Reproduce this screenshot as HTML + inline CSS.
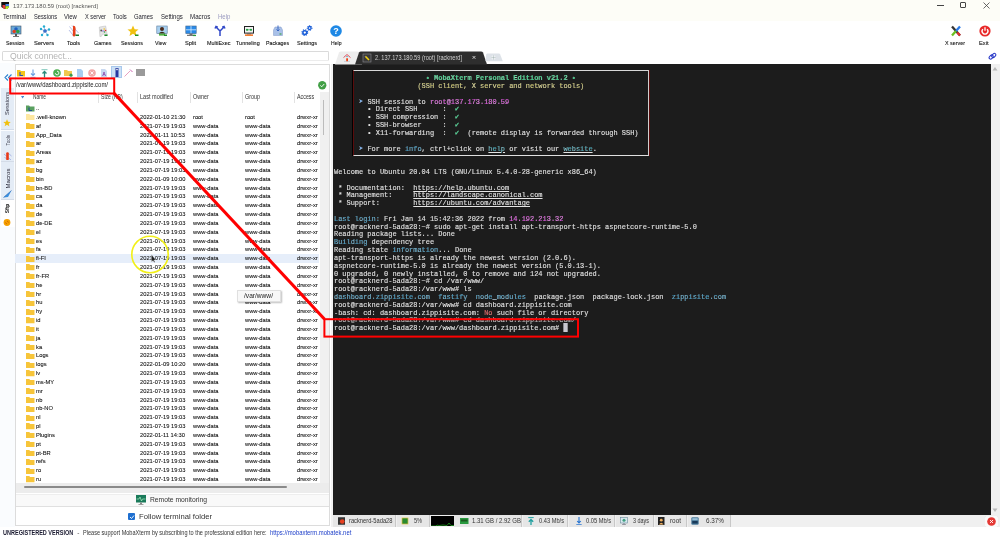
<!DOCTYPE html><html><head><meta charset="utf-8"><style>
*{margin:0;padding:0;box-sizing:border-box}
html,body{width:1000px;height:537px;overflow:hidden;background:#fff;}
body{filter:blur(0.25px);font-family:"Liberation Sans",sans-serif;color:#1a1a1a}
.a{position:absolute;white-space:nowrap}
.t{font-size:6.6px;line-height:8px}
.term{white-space:pre;font-family:"Liberation Mono",monospace;font-size:8px;line-height:7.82px;color:#e4e4e4;-webkit-text-stroke:0.12px #e4e4e4;transform:scaleX(0.86875);transform-origin:0 0}
.tb{font-size:6.2px;line-height:7px;color:#222;text-align:center;transform:scaleX(0.86)}
.row{position:absolute;left:15px;width:304px;height:8.834px;font-size:5.75px;line-height:8.834px;color:#111;overflow:hidden;-webkit-text-stroke:0.08px #111}
.row span{position:absolute;top:0}
</style></head><body><div class="a" style="left:0;top:0;width:1000px;height:21px;background:#fdfdf7"></div><svg class="a" style="left:1.2px;top:2px" width="8" height="7" viewBox="0 0 8 7"><path d="M0.3 0H8V5L6 7H3.5L0.3 5Z" fill="#111"/><path d="M1.5 3H4.5V7H3.5L1.5 5.5Z" fill="#e83a3a"/><rect x="4.5" y="2" width="3.5" height="2.3" fill="#4a8ae8"/><path d="M4.5 4.3H8V5.2L6 7H4.5Z" fill="#b8f020"/></svg><div class="a" style="left:12.60px;top:2.80px;font-size:6.0px;line-height:7.20px;color:#555;transform:scaleX(0.9866);transform-origin:0 50%;">137.173.180.59 (root) [racknerd]</div><div class="a" style="left:936.5px;top:5px;width:7px;height:0.8px;background:#444"></div><div class="a" style="left:960.2px;top:2.4px;width:5.8px;height:5.8px;border:0.8px solid #444;border-radius:1px"></div><svg class="a" style="left:983px;top:2.2px" width="7" height="7" viewBox="0 0 7 7"><path d="M0.5 0.5L6.5 6.5M6.5 0.5L0.5 6.5" stroke="#444" stroke-width="0.8"/></svg><div class="a" style="left:3.40px;top:12.82px;font-size:6.8px;line-height:8.16px;color:#1e1e28;transform:scaleX(0.8951);transform-origin:0 50%;">Terminal</div><div class="a" style="left:33.90px;top:12.82px;font-size:6.8px;line-height:8.16px;color:#1e1e28;transform:scaleX(0.8372);transform-origin:0 50%;">Sessions</div><div class="a" style="left:64.00px;top:12.82px;font-size:6.8px;line-height:8.16px;color:#1e1e28;transform:scaleX(0.8757);transform-origin:0 50%;">View</div><div class="a" style="left:84.60px;top:12.82px;font-size:6.8px;line-height:8.16px;color:#1e1e28;transform:scaleX(0.8295);transform-origin:0 50%;">X server</div><div class="a" style="left:113.20px;top:12.82px;font-size:6.8px;line-height:8.16px;color:#1e1e28;transform:scaleX(0.8693);transform-origin:0 50%;">Tools</div><div class="a" style="left:134.00px;top:12.82px;font-size:6.8px;line-height:8.16px;color:#1e1e28;transform:scaleX(0.8669);transform-origin:0 50%;">Games</div><div class="a" style="left:160.70px;top:12.82px;font-size:6.8px;line-height:8.16px;color:#1e1e28;transform:scaleX(0.8872);transform-origin:0 50%;">Settings</div><div class="a" style="left:189.70px;top:12.82px;font-size:6.8px;line-height:8.16px;color:#1e1e28;transform:scaleX(0.9106);transform-origin:0 50%;">Macros</div><div class="a" style="left:217.70px;top:12.82px;font-size:6.8px;line-height:8.16px;color:#9a9ac0;transform:scaleX(0.8795);transform-origin:0 50%;">Help</div><div class="a" style="left:6.10px;top:39.18px;font-size:6.2px;line-height:7.44px;color:#111;transform:scaleX(0.8342);transform-origin:0 50%;-webkit-text-stroke:0.1px #111">Session</div><div class="a" style="left:34.20px;top:39.18px;font-size:6.2px;line-height:7.44px;color:#111;transform:scaleX(0.9410);transform-origin:0 50%;-webkit-text-stroke:0.1px #111">Servers</div><div class="a" style="left:67.40px;top:39.18px;font-size:6.2px;line-height:7.44px;color:#111;transform:scaleX(0.9120);transform-origin:0 50%;-webkit-text-stroke:0.1px #111">Tools</div><div class="a" style="left:93.70px;top:39.18px;font-size:6.2px;line-height:7.44px;color:#111;transform:scaleX(0.8757);transform-origin:0 50%;-webkit-text-stroke:0.1px #111">Games</div><div class="a" style="left:120.80px;top:39.18px;font-size:6.2px;line-height:7.44px;color:#111;transform:scaleX(0.8705);transform-origin:0 50%;-webkit-text-stroke:0.1px #111">Sessions</div><div class="a" style="left:155.00px;top:39.18px;font-size:6.2px;line-height:7.44px;color:#111;transform:scaleX(0.8554);transform-origin:0 50%;-webkit-text-stroke:0.1px #111">View</div><div class="a" style="left:184.60px;top:39.18px;font-size:6.2px;line-height:7.44px;color:#111;transform:scaleX(0.9203);transform-origin:0 50%;-webkit-text-stroke:0.1px #111">Split</div><div class="a" style="left:207.40px;top:39.18px;font-size:6.2px;line-height:7.44px;color:#111;transform:scaleX(0.8782);transform-origin:0 50%;-webkit-text-stroke:0.1px #111">MultiExec</div><div class="a" style="left:236.30px;top:39.18px;font-size:6.2px;line-height:7.44px;color:#111;transform:scaleX(0.8777);transform-origin:0 50%;-webkit-text-stroke:0.1px #111">Tunneling</div><div class="a" style="left:265.70px;top:39.18px;font-size:6.2px;line-height:7.44px;color:#111;transform:scaleX(0.8484);transform-origin:0 50%;-webkit-text-stroke:0.1px #111">Packages</div><div class="a" style="left:296.70px;top:39.18px;font-size:6.2px;line-height:7.44px;color:#111;transform:scaleX(0.9017);transform-origin:0 50%;-webkit-text-stroke:0.1px #111">Settings</div><div class="a" style="left:330.50px;top:39.18px;font-size:6.2px;line-height:7.44px;color:#111;transform:scaleX(0.8234);transform-origin:0 50%;-webkit-text-stroke:0.1px #111">Help</div><div class="a" style="left:945.00px;top:39.18px;font-size:6.2px;line-height:7.44px;color:#111;transform:scaleX(0.8664);transform-origin:0 50%;-webkit-text-stroke:0.1px #111">X server</div><div class="a" style="left:979.40px;top:39.18px;font-size:6.2px;line-height:7.44px;color:#111;transform:scaleX(0.9288);transform-origin:0 50%;-webkit-text-stroke:0.1px #111">Exit</div><svg class="a" style="left:9.8px;top:25px" width="12" height="12" viewBox="0 0 12 12"><rect x="1" y="1" width="10" height="8" fill="#6aa8d8" stroke="#456" stroke-width="0.6"/><circle cx="6" cy="4" r="1.8" fill="#2060c0"/><circle cx="4.2" cy="6.5" r="1.8" fill="#e04020"/><circle cx="7.8" cy="6.5" r="1.8" fill="#30a040"/><rect x="5" y="9" width="2" height="2" fill="#555"/><rect x="3" y="11" width="6" height="0.8" fill="#555"/></svg><svg class="a" style="left:38.7px;top:25px" width="12" height="12" viewBox="0 0 12 12"><circle cx="6" cy="6" r="1.8" fill="#3050c0"/><g fill="#20b0d0"><circle cx="2" cy="4" r="1.2"/><circle cx="5" cy="1.5" r="1.2"/><circle cx="10" cy="4.5" r="1.2"/><circle cx="3" cy="10" r="1.2"/><circle cx="8.5" cy="10" r="1.2"/></g><path d="M6 6L2 4M6 6L5 1.5M6 6L10 4.5M6 6L3 10M6 6L8.5 10" stroke="#4090d0" stroke-width="0.5"/></svg><svg class="a" style="left:67.5px;top:25px" width="12" height="12" viewBox="0 0 12 12"><path d="M1.5 1.5L9 11M1 5L6 11.5M4 0.5L10.5 8" stroke="#8a98d8" stroke-width="0.6"/><path d="M5 0.8Q7.5 0.5 7.6 3L7.4 11Q6 11.8 4.8 11Z" fill="#e8401a"/><rect x="7.5" y="9.5" width="3.5" height="1.5" fill="#1a7a2a"/></svg><svg class="a" style="left:97.3px;top:25px" width="12" height="12" viewBox="0 0 12 12"><path d="M3 1.5L9.5 1.5L9.5 11H7L6 9H5L3.5 11H2Z" fill="#e4e4e4" stroke="#b0b0b0" stroke-width="0.4" transform="rotate(-10 6 6)"/><circle cx="4.2" cy="5.5" r="0.9" fill="#555"/><circle cx="7.2" cy="4" r="0.8" fill="#f0c020"/><circle cx="8.5" cy="5.5" r="0.8" fill="#e03030"/><circle cx="6" cy="6" r="0.8" fill="#8a6ae0"/><circle cx="7.5" cy="7" r="0.8" fill="#30a040"/><rect x="7.5" y="9.5" width="3" height="1.5" fill="#1a8a2a"/></svg><svg class="a" style="left:127px;top:25px" width="12" height="12" viewBox="0 0 12 12"><path d="M6 0.5L7.6 4.3L11.5 4.5L8.5 7L9.5 11L6 8.8L2.5 11L3.5 7L0.5 4.5L4.4 4.3Z" fill="#f0c010"/><rect x="8" y="9.5" width="3.5" height="1.5" fill="#209020"/></svg><svg class="a" style="left:156px;top:25px" width="12" height="12" viewBox="0 0 12 12"><rect x="0.8" y="1" width="10.4" height="7.5" fill="#a8d0f0" stroke="#5a7a9a" stroke-width="0.6"/><circle cx="6" cy="4" r="2" fill="#4a2a1a"/><path d="M2.5 8.5Q6 5 9.5 8.5Z" fill="#3a2a1a"/><rect x="3" y="8.6" width="6" height="2" fill="#50b040"/><rect x="8" y="9.5" width="3" height="1.5" fill="#1a8a2a"/></svg><svg class="a" style="left:184.8px;top:25px" width="12" height="12" viewBox="0 0 12 12"><rect x="0.8" y="1" width="10.4" height="7.6" fill="#2a8ae8" stroke="#4a6a8a" stroke-width="0.6"/><path d="M6 1V8.6M0.8 4.8H11.2" stroke="#d8ecff" stroke-width="0.8"/><rect x="4.5" y="8.6" width="3" height="1.2" fill="#555"/><rect x="2" y="9.8" width="8" height="1" fill="#555"/><rect x="8" y="9.8" width="3" height="1.3" fill="#2a9a3a"/></svg><svg class="a" style="left:213.7px;top:25px" width="12" height="12" viewBox="0 0 12 12"><path d="M6 11V6L2 2M6 6L10 2M1 3.5L2 1.5L3.8 2.2M11 3.5L10 1.5L8.2 2.2" stroke="#3048c8" stroke-width="1.5" fill="none"/></svg><svg class="a" style="left:242.5px;top:25px" width="12" height="12" viewBox="0 0 12 12"><rect x="1" y="1" width="10" height="7.6" fill="#222"/><rect x="2" y="2" width="8" height="5.6" fill="#f4f4f4"/><circle cx="4" cy="4.8" r="1.1" fill="#20a040"/><circle cx="8" cy="4.8" r="1.1" fill="#20a040"/><path d="M4 4.8H8" stroke="#20a040" stroke-width="0.7"/><rect x="4" y="8.6" width="4" height="0.8" fill="#555"/><rect x="2" y="9.4" width="8" height="1.5" fill="#f07020"/></svg><svg class="a" style="left:272.3px;top:25px" width="12" height="12" viewBox="0 0 12 12"><path d="M1.5 5L3 2H9L10.5 5V10.5H1.5Z" fill="#a8c0e8" stroke="#8098c8" stroke-width="0.5"/><path d="M6 0.5V6M4.5 4.5L6 6L7.5 4.5" stroke="#3060c0" stroke-width="0.9" fill="none"/><rect x="7.5" y="8.5" width="2" height="1" fill="#30a030"/></svg><svg class="a" style="left:301.2px;top:25px" width="12" height="12" viewBox="0 0 12 12"><g fill="none" stroke="#1a5ed8"><circle cx="3.8" cy="7.6" r="1.9" stroke-width="1.5"/><circle cx="3.8" cy="7.6" r="2.9" stroke-width="1.1" stroke-dasharray="1.2 1.08"/><circle cx="8.6" cy="3" r="1.5" stroke-width="1.3"/><circle cx="8.6" cy="3" r="2.4" stroke-width="1" stroke-dasharray="1 0.9"/></g></svg><svg class="a" style="left:330px;top:25px" width="12" height="12" viewBox="0 0 12 12"><circle cx="6" cy="6" r="5.8" fill="#1e88e5"/><text x="6" y="9.3" font-family="Liberation Sans" font-weight="bold" font-size="9" fill="#fff" text-anchor="middle">?</text></svg><svg class="a" style="left:949.5px;top:25px" width="12" height="12" viewBox="0 0 12 12"><path d="M2 1.5L10 10.5" stroke="#333" stroke-width="2.3"/><path d="M10 1.5L6 6" stroke="#2a7ae8" stroke-width="2.3"/><path d="M6 6L2 10.5" stroke="#6ac020" stroke-width="2.3"/><path d="M7.3 7.5L10 10.5" stroke="#e03030" stroke-width="2.3"/></svg><svg class="a" style="left:979px;top:25px" width="12" height="12" viewBox="0 0 12 12"><circle cx="6" cy="6" r="5.6" fill="#e82a2a"/><path d="M3.9 4.1A2.9 2.9 0 1 0 8.1 4.1" stroke="#fff" stroke-width="1.3" fill="none"/><path d="M6 2.3V5.8" stroke="#fff" stroke-width="1.3"/></svg><div class="a" style="left:1.5px;top:51.3px;width:327.5px;height:10.2px;border:1px solid #dadada;border-bottom-color:#ececec;border-radius:1.5px;background:#fff"></div><div class="a" style="left:10.00px;top:51.20px;font-size:9.0px;line-height:10.80px;color:#b4b4b4;transform:scaleX(0.9608);transform-origin:0 50%;">Quick connect...</div><svg class="a" style="left:987.5px;top:51.5px" width="9" height="9" viewBox="0 0 9 9"><g fill="none" stroke="#2a3ac8" stroke-width="1.1"><rect x="0.9" y="3.6" width="4.6" height="3" rx="1.5" transform="rotate(-45 3.2 5.1)"/><rect x="3.5" y="1.9" width="4.6" height="3" rx="1.5" transform="rotate(-45 5.8 3.4)"/></g></svg><div class="a" style="left:0;top:63px;width:14.5px;height:464px;background:#fafcfe"></div><svg class="a" style="left:3.5px;top:73.5px" width="8" height="7" viewBox="0 0 8 7"><path d="M4 0.5L1 3.5L4 6.5M7.5 0.5L4.5 3.5L7.5 6.5" stroke="#2a80d0" stroke-width="1.1" fill="none"/></svg><div class="a" style="left:1px;top:87.5px;width:12.5px;height:42px;background:#e4ecf6;border-bottom:1px solid #d4dce8"></div><div class="a" style="left:1px;top:130.5px;width:12.5px;height:31px;background:#e4ecf6;border-bottom:1px solid #d4dce8"></div><div class="a" style="left:1px;top:162px;width:12.5px;height:37.5px;background:#e4ecf6;border-bottom:1px solid #d4dce8"></div><div class="a" style="left:1px;top:200px;width:13.5px;height:27px;background:#fff"></div><div class="a" style="left:-3.77px;top:100.22px;width:23.53px;height:6.96px;font-size:5.8px;line-height:6.96px;font-weight:normal;color:#2a2a3a;transform:rotate(-90deg) scaleX(0.986);transform-origin:50% 50%">Sessions</div><div class="a" style="left:1.70px;top:136.56px;width:12.61px;height:6.48px;font-size:5.4px;line-height:6.48px;font-weight:normal;color:#2a2a3a;transform:rotate(-90deg) scaleX(0.825);transform-origin:50% 50%">Tools</div><div class="a" style="left:-1.51px;top:174.52px;width:19.01px;height:6.96px;font-size:5.8px;line-height:6.96px;font-weight:normal;color:#2a2a3a;transform:rotate(-90deg) scaleX(1.052);transform-origin:50% 50%">Macros</div><div class="a" style="left:2.36px;top:205.27px;width:11.27px;height:6.96px;font-size:5.8px;line-height:6.96px;font-weight:bold;color:#111;transform:rotate(-90deg) scaleX(0.843);transform-origin:50% 50%">Sftp</div><svg class="a" style="left:3.2px;top:119px" width="8" height="8" viewBox="0 0 12 12"><path d="M6 0.5L7.6 4.3L11.5 4.5L8.5 7L9.5 11L6 8.8L2.5 11L3.5 7L0.5 4.5L4.4 4.3Z" fill="#f0c010"/></svg><svg class="a" style="left:3px;top:151.5px" width="9" height="8.5" viewBox="0 0 9 8.5"><path d="M1 2L8 8M1.5 5L4 7.5M5 1L8.5 4" stroke="#8090d8" stroke-width="0.6"/><rect x="3.2" y="0.3" width="2.6" height="8" rx="1.2" fill="#e83a18"/></svg><svg class="a" style="left:3px;top:189.5px" width="9" height="8" viewBox="0 0 9 8"><path d="M0.5 7.5L8.5 0.5L5 7Z" fill="#3a90e0"/><path d="M0.5 7.5L8.5 0.5" stroke="#2060b0" stroke-width="0.6"/></svg><svg class="a" style="left:3px;top:218.5px" width="8" height="7" viewBox="0 0 8 7"><circle cx="4" cy="3.5" r="3.4" fill="#f5a000"/><path d="M2.2 3.5L4 5M4 2L5.8 3.5" stroke="#d06000" stroke-width="0.8"/></svg><div class="a" style="left:14.5px;top:64.2px;width:315.5px;height:462.3px;border:1px solid #dcdcdc;background:#fff"></div><div class="a" style="left:111px;top:66px;width:10.5px;height:12px;background:#cce0f5;border:1px solid #a8c8ec"></div><div class="a" style="left:16.8px;top:69px;line-height:0"><svg width="8" height="8" viewBox="0 0 8 8"><path d="M0 1H3L4 2H8V7.5H0Z" fill="#f5c518"/><path d="M3 3V6.5H6" stroke="#2050c0" stroke-width="1.1" fill="none"/></svg></div><div class="a" style="left:30px;top:68.5px;line-height:0"><svg width="6" height="9" viewBox="0 0 6 9"><path d="M3 0.5V6.5M1 4.5L3 6.5L5 4.5" stroke="#6a9ee0" stroke-width="1.1" fill="none"/><path d="M0.5 8.3H5.5" stroke="#6a9ee0" stroke-width="0.8"/></svg></div><div class="a" style="left:41px;top:68.5px;line-height:0"><svg width="7" height="9" viewBox="0 0 7 9"><path d="M0.5 0.7H6.5" stroke="#5cb8a8" stroke-width="0.8"/><path d="M3.5 8.5V2.5M1.5 4.5L3.5 2.5L5.5 4.5" stroke="#2a8a7a" stroke-width="1.3" fill="none"/></svg></div><div class="a" style="left:52.5px;top:69px;line-height:0"><svg width="8" height="8" viewBox="0 0 8 8"><circle cx="4" cy="4" r="3.8" fill="#4caf50"/><path d="M2.3 4.2A1.8 1.8 0 1 0 4 2.2" stroke="#fff" stroke-width="0.9" fill="none"/></svg></div><div class="a" style="left:63.7px;top:69px;line-height:0"><svg width="9" height="8" viewBox="0 0 9 8"><path d="M0 1H3L4 2H8V7H0Z" fill="#f0c850"/><circle cx="7" cy="6.2" r="1.6" fill="#3a9a50"/></svg></div><div class="a" style="left:77px;top:69px;line-height:0"><svg width="6" height="8" viewBox="0 0 6 8"><path d="M0 0H4L6 2V8H0Z" fill="#a8cdf0"/></svg></div><div class="a" style="left:87.7px;top:69px;line-height:0"><svg width="8" height="8" viewBox="0 0 8 8"><circle cx="4" cy="4" r="3.8" fill="#f0a8a8"/><path d="M2.5 2.5L5.5 5.5M5.5 2.5L2.5 5.5" stroke="#fff" stroke-width="0.9"/></svg></div><div class="a" style="left:101px;top:69px;line-height:0"><svg width="6" height="8" viewBox="0 0 6 8"><path d="M0 0H4L6 2V8H0Z" fill="#c8d8f0"/><text x="3" y="7" font-size="5" font-family="Liberation Sans" font-weight="bold" fill="#8030a0" text-anchor="middle">A</text></svg></div><div class="a" style="left:114.5px;top:68px;line-height:0"><svg width="4" height="9" viewBox="0 0 4 9"><rect x="0.5" y="0" width="3" height="9" fill="#2838a0"/><rect x="1.2" y="0.8" width="1.6" height="1.4" fill="#eee"/></svg></div><div class="a" style="left:123.7px;top:69px;line-height:0"><svg width="9" height="8" viewBox="0 0 9 8"><path d="M0.5 7.5L6 2" stroke="#e8a0c0" stroke-width="1"/><path d="M6 0.5L8.5 3" stroke="#c040a0" stroke-width="0.8"/></svg></div><div class="a" style="left:135.7px;top:69.2px;line-height:0"><svg width="9" height="7" viewBox="0 0 9 7"><rect x="0" y="0" width="9" height="7" fill="#9a9a9a"/></svg></div><svg class="a" style="left:318px;top:81px" width="8.5" height="8.5" viewBox="0 0 8 8"><circle cx="4" cy="4" r="3.9" fill="#43a047"/><path d="M2.2 4.2L3.5 5.4L5.9 2.8" stroke="#fff" stroke-width="0.9" fill="none"/></svg><div class="a" style="left:16.00px;top:81.40px;font-size:6.5px;line-height:7.80px;color:#222;transform:scaleX(0.9161);transform-origin:0 50%;">/var/www/dashboard.zippisite.com/</div><svg class="a" style="left:20.6px;top:96px" width="3.2" height="2.6" viewBox="0 0 5 4"><path d="M0 0H5L2.5 4Z" fill="#4a88d0"/></svg><div class="a" style="left:33.00px;top:93.42px;font-size:6.3px;line-height:7.56px;color:#333;transform:scaleX(0.7617);transform-origin:0 50%;">Name</div><div class="a" style="left:101.40px;top:93.42px;font-size:6.3px;line-height:7.56px;color:#333;transform:scaleX(0.8118);transform-origin:0 50%;">Size (KB)</div><div class="a" style="left:139.80px;top:93.42px;font-size:6.3px;line-height:7.56px;color:#333;transform:scaleX(0.8807);transform-origin:0 50%;">Last modified</div><div class="a" style="left:192.70px;top:93.42px;font-size:6.3px;line-height:7.56px;color:#333;transform:scaleX(0.8515);transform-origin:0 50%;">Owner</div><div class="a" style="left:244.50px;top:93.42px;font-size:6.3px;line-height:7.56px;color:#333;transform:scaleX(0.8567);transform-origin:0 50%;">Group</div><div class="a" style="left:297.00px;top:93.42px;font-size:6.3px;line-height:7.56px;color:#333;transform:scaleX(0.8470);transform-origin:0 50%;">Access</div><div class="a" style="left:98.4px;top:92px;width:0.8px;height:11px;background:#e2e2e2"></div><div class="a" style="left:136.8px;top:92px;width:0.8px;height:11px;background:#e2e2e2"></div><div class="a" style="left:189.6px;top:92px;width:0.8px;height:11px;background:#e2e2e2"></div><div class="a" style="left:241.9px;top:92px;width:0.8px;height:11px;background:#e2e2e2"></div><div class="a" style="left:293.75px;top:92px;width:0.8px;height:11px;background:#e2e2e2"></div><div class="a" style="left:319.5px;top:92px;width:9px;height:391px;background:#f0f0f0"></div><div class="a" style="left:322.5px;top:100px;width:1.2px;height:35px;background:#bcbcbc"></div><div class="row" style="top:104.08px;"><svg style="position:absolute;left:11.2px;top:1.2px" width="8.5" height="6.5" viewBox="0 0 8.5 6.5"><path d="M0 0.5H3L4 1.5H8.5V6.5H0Z" fill="#5aa060"/><path d="M3 2.5V5.5H6" stroke="#1a4a90" stroke-width="1" fill="none"/></svg><span style="left:21px">..</span></div><div class="row" style="top:112.92px;"><svg style="position:absolute;left:11.2px;top:1.3px" width="8.5" height="6.2" viewBox="0 0 8.5 6.2"><path d="M0 0H3.2L4.2 1H8.5V6.2H0Z" fill="#fde7a0"/></svg><span style="left:21px">.well-known</span><span style="left:125px">2022-01-10 21:30</span><span style="left:178px">root</span><span style="left:230px">root</span><span style="left:282px">drwxr-xr</span></div><div class="row" style="top:121.75px;"><svg style="position:absolute;left:11.2px;top:1.3px" width="8.5" height="6.2" viewBox="0 0 8.5 6.2"><path d="M0 0H3.2L4.2 1H8.5V6.2H0Z" fill="#f7c53a"/></svg><span style="left:21px">af</span><span style="left:125px">2021-07-19 19:03</span><span style="left:178px">www-data</span><span style="left:230px">www-data</span><span style="left:282px">drwxr-xr</span></div><div class="row" style="top:130.59px;"><svg style="position:absolute;left:11.2px;top:1.3px" width="8.5" height="6.2" viewBox="0 0 8.5 6.2"><path d="M0 0H3.2L4.2 1H8.5V6.2H0Z" fill="#f7c53a"/></svg><span style="left:21px">App_Data</span><span style="left:125px">2022-01-11 10:53</span><span style="left:178px">www-data</span><span style="left:230px">www-data</span><span style="left:282px">drwxr-xr</span></div><div class="row" style="top:139.42px;"><svg style="position:absolute;left:11.2px;top:1.3px" width="8.5" height="6.2" viewBox="0 0 8.5 6.2"><path d="M0 0H3.2L4.2 1H8.5V6.2H0Z" fill="#f7c53a"/></svg><span style="left:21px">ar</span><span style="left:125px">2021-07-19 19:03</span><span style="left:178px">www-data</span><span style="left:230px">www-data</span><span style="left:282px">drwxr-xr</span></div><div class="row" style="top:148.25px;"><svg style="position:absolute;left:11.2px;top:1.3px" width="8.5" height="6.2" viewBox="0 0 8.5 6.2"><path d="M0 0H3.2L4.2 1H8.5V6.2H0Z" fill="#f7c53a"/></svg><span style="left:21px">Areas</span><span style="left:125px">2021-07-19 19:03</span><span style="left:178px">www-data</span><span style="left:230px">www-data</span><span style="left:282px">drwxr-xr</span></div><div class="row" style="top:157.09px;"><svg style="position:absolute;left:11.2px;top:1.3px" width="8.5" height="6.2" viewBox="0 0 8.5 6.2"><path d="M0 0H3.2L4.2 1H8.5V6.2H0Z" fill="#f7c53a"/></svg><span style="left:21px">az</span><span style="left:125px">2021-07-19 19:03</span><span style="left:178px">www-data</span><span style="left:230px">www-data</span><span style="left:282px">drwxr-xr</span></div><div class="row" style="top:165.92px;"><svg style="position:absolute;left:11.2px;top:1.3px" width="8.5" height="6.2" viewBox="0 0 8.5 6.2"><path d="M0 0H3.2L4.2 1H8.5V6.2H0Z" fill="#f7c53a"/></svg><span style="left:21px">bg</span><span style="left:125px">2021-07-19 19:03</span><span style="left:178px">www-data</span><span style="left:230px">www-data</span><span style="left:282px">drwxr-xr</span></div><div class="row" style="top:174.75px;"><svg style="position:absolute;left:11.2px;top:1.3px" width="8.5" height="6.2" viewBox="0 0 8.5 6.2"><path d="M0 0H3.2L4.2 1H8.5V6.2H0Z" fill="#f7c53a"/></svg><span style="left:21px">bin</span><span style="left:125px">2022-01-09 10:00</span><span style="left:178px">www-data</span><span style="left:230px">www-data</span><span style="left:282px">drwxr-xr</span></div><div class="row" style="top:183.59px;"><svg style="position:absolute;left:11.2px;top:1.3px" width="8.5" height="6.2" viewBox="0 0 8.5 6.2"><path d="M0 0H3.2L4.2 1H8.5V6.2H0Z" fill="#f7c53a"/></svg><span style="left:21px">bn-BD</span><span style="left:125px">2021-07-19 19:03</span><span style="left:178px">www-data</span><span style="left:230px">www-data</span><span style="left:282px">drwxr-xr</span></div><div class="row" style="top:192.42px;"><svg style="position:absolute;left:11.2px;top:1.3px" width="8.5" height="6.2" viewBox="0 0 8.5 6.2"><path d="M0 0H3.2L4.2 1H8.5V6.2H0Z" fill="#f7c53a"/></svg><span style="left:21px">ca</span><span style="left:125px">2021-07-19 19:03</span><span style="left:178px">www-data</span><span style="left:230px">www-data</span><span style="left:282px">drwxr-xr</span></div><div class="row" style="top:201.26px;"><svg style="position:absolute;left:11.2px;top:1.3px" width="8.5" height="6.2" viewBox="0 0 8.5 6.2"><path d="M0 0H3.2L4.2 1H8.5V6.2H0Z" fill="#f7c53a"/></svg><span style="left:21px">da</span><span style="left:125px">2021-07-19 19:03</span><span style="left:178px">www-data</span><span style="left:230px">www-data</span><span style="left:282px">drwxr-xr</span></div><div class="row" style="top:210.09px;"><svg style="position:absolute;left:11.2px;top:1.3px" width="8.5" height="6.2" viewBox="0 0 8.5 6.2"><path d="M0 0H3.2L4.2 1H8.5V6.2H0Z" fill="#f7c53a"/></svg><span style="left:21px">de</span><span style="left:125px">2021-07-19 19:03</span><span style="left:178px">www-data</span><span style="left:230px">www-data</span><span style="left:282px">drwxr-xr</span></div><div class="row" style="top:218.92px;"><svg style="position:absolute;left:11.2px;top:1.3px" width="8.5" height="6.2" viewBox="0 0 8.5 6.2"><path d="M0 0H3.2L4.2 1H8.5V6.2H0Z" fill="#f7c53a"/></svg><span style="left:21px">de-DE</span><span style="left:125px">2021-07-19 19:03</span><span style="left:178px">www-data</span><span style="left:230px">www-data</span><span style="left:282px">drwxr-xr</span></div><div class="row" style="top:227.76px;"><svg style="position:absolute;left:11.2px;top:1.3px" width="8.5" height="6.2" viewBox="0 0 8.5 6.2"><path d="M0 0H3.2L4.2 1H8.5V6.2H0Z" fill="#f7c53a"/></svg><span style="left:21px">el</span><span style="left:125px">2021-07-19 19:03</span><span style="left:178px">www-data</span><span style="left:230px">www-data</span><span style="left:282px">drwxr-xr</span></div><div class="row" style="top:236.59px;"><svg style="position:absolute;left:11.2px;top:1.3px" width="8.5" height="6.2" viewBox="0 0 8.5 6.2"><path d="M0 0H3.2L4.2 1H8.5V6.2H0Z" fill="#f7c53a"/></svg><span style="left:21px">es</span><span style="left:125px">2021-07-19 19:03</span><span style="left:178px">www-data</span><span style="left:230px">www-data</span><span style="left:282px">drwxr-xr</span></div><div class="row" style="top:245.43px;"><svg style="position:absolute;left:11.2px;top:1.3px" width="8.5" height="6.2" viewBox="0 0 8.5 6.2"><path d="M0 0H3.2L4.2 1H8.5V6.2H0Z" fill="#f7c53a"/></svg><span style="left:21px">fa</span><span style="left:125px">2021-07-19 19:03</span><span style="left:178px">www-data</span><span style="left:230px">www-data</span><span style="left:282px">drwxr-xr</span></div><div class="row" style="top:254.26px;background:#e6eefa;"><svg style="position:absolute;left:11.2px;top:1.3px" width="8.5" height="6.2" viewBox="0 0 8.5 6.2"><path d="M0 0H3.2L4.2 1H8.5V6.2H0Z" fill="#f7c53a"/></svg><span style="left:21px">fi-FI</span><span style="left:125px">2021-07-19 19:03</span><span style="left:178px">www-data</span><span style="left:230px">www-data</span><span style="left:282px">drwxr-xr</span></div><div class="row" style="top:263.10px;"><svg style="position:absolute;left:11.2px;top:1.3px" width="8.5" height="6.2" viewBox="0 0 8.5 6.2"><path d="M0 0H3.2L4.2 1H8.5V6.2H0Z" fill="#f7c53a"/></svg><span style="left:21px">fr</span><span style="left:125px">2021-07-19 19:03</span><span style="left:178px">www-data</span><span style="left:230px">www-data</span><span style="left:282px">drwxr-xr</span></div><div class="row" style="top:271.93px;"><svg style="position:absolute;left:11.2px;top:1.3px" width="8.5" height="6.2" viewBox="0 0 8.5 6.2"><path d="M0 0H3.2L4.2 1H8.5V6.2H0Z" fill="#f7c53a"/></svg><span style="left:21px">fr-FR</span><span style="left:125px">2021-07-19 19:03</span><span style="left:178px">www-data</span><span style="left:230px">www-data</span><span style="left:282px">drwxr-xr</span></div><div class="row" style="top:280.76px;"><svg style="position:absolute;left:11.2px;top:1.3px" width="8.5" height="6.2" viewBox="0 0 8.5 6.2"><path d="M0 0H3.2L4.2 1H8.5V6.2H0Z" fill="#f7c53a"/></svg><span style="left:21px">he</span><span style="left:125px">2021-07-19 19:03</span><span style="left:178px">www-data</span><span style="left:230px">www-data</span><span style="left:282px">drwxr-xr</span></div><div class="row" style="top:289.60px;"><svg style="position:absolute;left:11.2px;top:1.3px" width="8.5" height="6.2" viewBox="0 0 8.5 6.2"><path d="M0 0H3.2L4.2 1H8.5V6.2H0Z" fill="#f7c53a"/></svg><span style="left:21px">hr</span><span style="left:125px">2021-07-19 19:03</span><span style="left:178px">www-data</span><span style="left:230px">www-data</span><span style="left:282px">drwxr-xr</span></div><div class="row" style="top:298.43px;"><svg style="position:absolute;left:11.2px;top:1.3px" width="8.5" height="6.2" viewBox="0 0 8.5 6.2"><path d="M0 0H3.2L4.2 1H8.5V6.2H0Z" fill="#f7c53a"/></svg><span style="left:21px">hu</span><span style="left:125px">2021-07-19 19:03</span><span style="left:178px">www-data</span><span style="left:230px">www-data</span><span style="left:282px">drwxr-xr</span></div><div class="row" style="top:307.27px;"><svg style="position:absolute;left:11.2px;top:1.3px" width="8.5" height="6.2" viewBox="0 0 8.5 6.2"><path d="M0 0H3.2L4.2 1H8.5V6.2H0Z" fill="#f7c53a"/></svg><span style="left:21px">hy</span><span style="left:125px">2021-07-19 19:03</span><span style="left:178px">www-data</span><span style="left:230px">www-data</span><span style="left:282px">drwxr-xr</span></div><div class="row" style="top:316.10px;"><svg style="position:absolute;left:11.2px;top:1.3px" width="8.5" height="6.2" viewBox="0 0 8.5 6.2"><path d="M0 0H3.2L4.2 1H8.5V6.2H0Z" fill="#f7c53a"/></svg><span style="left:21px">id</span><span style="left:125px">2021-07-19 19:03</span><span style="left:178px">www-data</span><span style="left:230px">www-data</span><span style="left:282px">drwxr-xr</span></div><div class="row" style="top:324.93px;"><svg style="position:absolute;left:11.2px;top:1.3px" width="8.5" height="6.2" viewBox="0 0 8.5 6.2"><path d="M0 0H3.2L4.2 1H8.5V6.2H0Z" fill="#f7c53a"/></svg><span style="left:21px">it</span><span style="left:125px">2021-07-19 19:03</span><span style="left:178px">www-data</span><span style="left:230px">www-data</span><span style="left:282px">drwxr-xr</span></div><div class="row" style="top:333.77px;"><svg style="position:absolute;left:11.2px;top:1.3px" width="8.5" height="6.2" viewBox="0 0 8.5 6.2"><path d="M0 0H3.2L4.2 1H8.5V6.2H0Z" fill="#f7c53a"/></svg><span style="left:21px">ja</span><span style="left:125px">2021-07-19 19:03</span><span style="left:178px">www-data</span><span style="left:230px">www-data</span><span style="left:282px">drwxr-xr</span></div><div class="row" style="top:342.60px;"><svg style="position:absolute;left:11.2px;top:1.3px" width="8.5" height="6.2" viewBox="0 0 8.5 6.2"><path d="M0 0H3.2L4.2 1H8.5V6.2H0Z" fill="#f7c53a"/></svg><span style="left:21px">ka</span><span style="left:125px">2021-07-19 19:03</span><span style="left:178px">www-data</span><span style="left:230px">www-data</span><span style="left:282px">drwxr-xr</span></div><div class="row" style="top:351.44px;"><svg style="position:absolute;left:11.2px;top:1.3px" width="8.5" height="6.2" viewBox="0 0 8.5 6.2"><path d="M0 0H3.2L4.2 1H8.5V6.2H0Z" fill="#f7c53a"/></svg><span style="left:21px">Logs</span><span style="left:125px">2021-07-19 19:03</span><span style="left:178px">www-data</span><span style="left:230px">www-data</span><span style="left:282px">drwxr-xr</span></div><div class="row" style="top:360.27px;"><svg style="position:absolute;left:11.2px;top:1.3px" width="8.5" height="6.2" viewBox="0 0 8.5 6.2"><path d="M0 0H3.2L4.2 1H8.5V6.2H0Z" fill="#f7c53a"/></svg><span style="left:21px">logs</span><span style="left:125px">2022-01-09 10:20</span><span style="left:178px">www-data</span><span style="left:230px">www-data</span><span style="left:282px">drwxr-xr</span></div><div class="row" style="top:369.10px;"><svg style="position:absolute;left:11.2px;top:1.3px" width="8.5" height="6.2" viewBox="0 0 8.5 6.2"><path d="M0 0H3.2L4.2 1H8.5V6.2H0Z" fill="#f7c53a"/></svg><span style="left:21px">lv</span><span style="left:125px">2021-07-19 19:03</span><span style="left:178px">www-data</span><span style="left:230px">www-data</span><span style="left:282px">drwxr-xr</span></div><div class="row" style="top:377.94px;"><svg style="position:absolute;left:11.2px;top:1.3px" width="8.5" height="6.2" viewBox="0 0 8.5 6.2"><path d="M0 0H3.2L4.2 1H8.5V6.2H0Z" fill="#f7c53a"/></svg><span style="left:21px">ms-MY</span><span style="left:125px">2021-07-19 19:03</span><span style="left:178px">www-data</span><span style="left:230px">www-data</span><span style="left:282px">drwxr-xr</span></div><div class="row" style="top:386.77px;"><svg style="position:absolute;left:11.2px;top:1.3px" width="8.5" height="6.2" viewBox="0 0 8.5 6.2"><path d="M0 0H3.2L4.2 1H8.5V6.2H0Z" fill="#f7c53a"/></svg><span style="left:21px">mr</span><span style="left:125px">2021-07-19 19:03</span><span style="left:178px">www-data</span><span style="left:230px">www-data</span><span style="left:282px">drwxr-xr</span></div><div class="row" style="top:395.61px;"><svg style="position:absolute;left:11.2px;top:1.3px" width="8.5" height="6.2" viewBox="0 0 8.5 6.2"><path d="M0 0H3.2L4.2 1H8.5V6.2H0Z" fill="#f7c53a"/></svg><span style="left:21px">nb</span><span style="left:125px">2021-07-19 19:03</span><span style="left:178px">www-data</span><span style="left:230px">www-data</span><span style="left:282px">drwxr-xr</span></div><div class="row" style="top:404.44px;"><svg style="position:absolute;left:11.2px;top:1.3px" width="8.5" height="6.2" viewBox="0 0 8.5 6.2"><path d="M0 0H3.2L4.2 1H8.5V6.2H0Z" fill="#f7c53a"/></svg><span style="left:21px">nb-NO</span><span style="left:125px">2021-07-19 19:03</span><span style="left:178px">www-data</span><span style="left:230px">www-data</span><span style="left:282px">drwxr-xr</span></div><div class="row" style="top:413.27px;"><svg style="position:absolute;left:11.2px;top:1.3px" width="8.5" height="6.2" viewBox="0 0 8.5 6.2"><path d="M0 0H3.2L4.2 1H8.5V6.2H0Z" fill="#f7c53a"/></svg><span style="left:21px">nl</span><span style="left:125px">2021-07-19 19:03</span><span style="left:178px">www-data</span><span style="left:230px">www-data</span><span style="left:282px">drwxr-xr</span></div><div class="row" style="top:422.11px;"><svg style="position:absolute;left:11.2px;top:1.3px" width="8.5" height="6.2" viewBox="0 0 8.5 6.2"><path d="M0 0H3.2L4.2 1H8.5V6.2H0Z" fill="#f7c53a"/></svg><span style="left:21px">pl</span><span style="left:125px">2021-07-19 19:03</span><span style="left:178px">www-data</span><span style="left:230px">www-data</span><span style="left:282px">drwxr-xr</span></div><div class="row" style="top:430.94px;"><svg style="position:absolute;left:11.2px;top:1.3px" width="8.5" height="6.2" viewBox="0 0 8.5 6.2"><path d="M0 0H3.2L4.2 1H8.5V6.2H0Z" fill="#f7c53a"/></svg><span style="left:21px">Plugins</span><span style="left:125px">2022-01-11 14:30</span><span style="left:178px">www-data</span><span style="left:230px">www-data</span><span style="left:282px">drwxr-xr</span></div><div class="row" style="top:439.78px;"><svg style="position:absolute;left:11.2px;top:1.3px" width="8.5" height="6.2" viewBox="0 0 8.5 6.2"><path d="M0 0H3.2L4.2 1H8.5V6.2H0Z" fill="#f7c53a"/></svg><span style="left:21px">pt</span><span style="left:125px">2021-07-19 19:03</span><span style="left:178px">www-data</span><span style="left:230px">www-data</span><span style="left:282px">drwxr-xr</span></div><div class="row" style="top:448.61px;"><svg style="position:absolute;left:11.2px;top:1.3px" width="8.5" height="6.2" viewBox="0 0 8.5 6.2"><path d="M0 0H3.2L4.2 1H8.5V6.2H0Z" fill="#f7c53a"/></svg><span style="left:21px">pt-BR</span><span style="left:125px">2021-07-19 19:03</span><span style="left:178px">www-data</span><span style="left:230px">www-data</span><span style="left:282px">drwxr-xr</span></div><div class="row" style="top:457.44px;"><svg style="position:absolute;left:11.2px;top:1.3px" width="8.5" height="6.2" viewBox="0 0 8.5 6.2"><path d="M0 0H3.2L4.2 1H8.5V6.2H0Z" fill="#f7c53a"/></svg><span style="left:21px">refs</span><span style="left:125px">2021-07-19 19:03</span><span style="left:178px">www-data</span><span style="left:230px">www-data</span><span style="left:282px">drwxr-xr</span></div><div class="row" style="top:466.28px;"><svg style="position:absolute;left:11.2px;top:1.3px" width="8.5" height="6.2" viewBox="0 0 8.5 6.2"><path d="M0 0H3.2L4.2 1H8.5V6.2H0Z" fill="#f7c53a"/></svg><span style="left:21px">ro</span><span style="left:125px">2021-07-19 19:03</span><span style="left:178px">www-data</span><span style="left:230px">www-data</span><span style="left:282px">drwxr-xr</span></div><div class="row" style="top:475.11px;"><svg style="position:absolute;left:11.2px;top:1.3px" width="8.5" height="6.2" viewBox="0 0 8.5 6.2"><path d="M0 0H3.2L4.2 1H8.5V6.2H0Z" fill="#f7c53a"/></svg><span style="left:21px">ru</span><span style="left:125px">2021-07-19 19:03</span><span style="left:178px">www-data</span><span style="left:230px">www-data</span><span style="left:282px">drwxr-xr</span></div><div class="a" style="left:15.5px;top:483px;width:313px;height:10px;background:#ececec"></div><div class="a" style="left:23.8px;top:486px;width:263px;height:2.3px;background:#8a8a8a;border-radius:1px"></div><div class="a" style="left:16px;top:493.5px;width:313px;height:13.5px;background:#f9f9f9;border-bottom:1px solid #e0e0e0;border-top:1px solid #eee"></div><svg class="a" style="left:136px;top:495px" width="10" height="10" viewBox="0 0 10 10"><rect x="0" y="0" width="10" height="7.5" fill="#1a7a5a"/><path d="M0.5 4H3L4 2L5.5 6L6.5 4H9.5" stroke="#c0ffd0" stroke-width="0.6" fill="none"/><rect x="4" y="7.5" width="2" height="1.5" fill="#888"/><rect x="2.5" y="9" width="5" height="0.8" fill="#888"/></svg><div class="a" style="left:150.00px;top:495.70px;font-size:7.0px;line-height:8.40px;color:#333;transform:scaleX(0.9638);transform-origin:0 50%;">Remote monitoring</div><div class="a" style="left:128px;top:513px;width:6.5px;height:7px;background:#1e6fd0;border-radius:1px"></div><svg class="a" style="left:128.5px;top:513.5px" width="6" height="6" viewBox="0 0 6 6"><path d="M1 3L2.5 4.5L5 1.5" stroke="#fff" stroke-width="0.9" fill="none"/></svg><div class="a" style="left:139.00px;top:512.70px;font-size:7.0px;line-height:8.40px;color:#333;transform:scaleX(1.0973);transform-origin:0 50%;">Follow terminal folder</div><div class="a" style="left:3.00px;top:528.80px;font-size:6.5px;line-height:7.80px;color:#1a1a30;font-weight:bold;transform:scaleX(0.8488);transform-origin:0 50%;">UNREGISTERED VERSION</div><div class="a" style="left:77.20px;top:528.80px;font-size:6.5px;line-height:7.80px;color:#555;transform:scaleX(1.0000);transform-origin:0 50%;">-</div><div class="a" style="left:83.40px;top:528.80px;font-size:6.5px;line-height:7.80px;color:#333;transform:scaleX(0.8555);transform-origin:0 50%;">Please support MobaXterm by subscribing to the professional edition here:</div><div class="a" style="left:270.00px;top:528.80px;font-size:6.5px;line-height:7.80px;color:#1a3cc8;transform:scaleX(0.9074);transform-origin:0 50%;">https://mobaxterm.mobatek.net</div><div class="a" style="left:330.5px;top:64px;width:2px;height:463px;background:#f2f2f2"></div><div class="a" style="left:332.5px;top:64px;width:658.5px;height:451px;background:#1c1c1c"></div><svg class="a" style="left:333px;top:50px" width="170" height="14.5" viewBox="0 0 170 14.5"><path d="M2 14.5L6 2.5Q6.5 1.5 8 1.5H24Q25.5 1.5 26 2.5L29 14.5Z" fill="#ededed"/><path d="M22 14.5L26 2.5Q26.5 1.5 28 1.5H148Q149.5 1.5 150 2.5L154 14.5Z" fill="#2e2e2e"/><path d="M152.5 11.2L153.2 4.5Q153.5 3.6 154.5 3.6H166Q166.8 3.6 167.2 4.5L169.8 11.2Z" fill="#dde2e8"/><path d="M160.5 5.2V9.8M158.2 7.5H162.8" stroke="#fff" stroke-width="1.6"/><path d="M160.5 5.2V9.8M158.2 7.5H162.8" stroke="#9aa" stroke-width="0.5"/><path d="M10.5 7.6L14 4.5L17.5 7.6" stroke="#e04050" stroke-width="0.9" fill="none"/><circle cx="14" cy="6.6" r="0.7" fill="#2a8aa0"/><rect x="13.2" y="8.3" width="1.8" height="3" fill="#f04010"/><path d="M11 11.4H17" stroke="#9ab" stroke-width="0.4"/><rect x="30" y="4" width="8" height="8" fill="#3a3a3a" stroke="#8a8a90" stroke-width="0.6"/><path d="M32.3 6.2L36 10" stroke="#f0d010" stroke-width="1.6"/><circle cx="31.8" cy="6.6" r="0.5" fill="#4040a0"/><path d="M139.6 6L142.4 8.8M142.4 6L139.6 8.8" stroke="#e8e8e8" stroke-width="0.8"/></svg><div class="a" style="left:375.00px;top:54.22px;font-size:6.3px;line-height:7.56px;color:#d0d0d0;transform:scaleX(0.8936);transform-origin:0 50%;">2. 137.173.180.59 (root) [racknerd]</div><div class="a" style="left:991px;top:64px;width:9px;height:451px;background:#f0f0f0"></div><svg class="a" style="left:992px;top:66px" width="6" height="5" viewBox="0 0 6 5"><path d="M0.5 4.5L3 1L5.5 4.5Z" fill="#b8b8b8"/></svg><svg class="a" style="left:992px;top:508px" width="6" height="5" viewBox="0 0 6 5"><path d="M0.5 0.5L3 4L5.5 0.5Z" fill="#b8b8b8"/></svg><div class="a" style="left:352.9px;top:69.5px;width:296.6px;height:86.4px;border-top:1.2px solid #d8d8d8;border-bottom:1.2px solid #e0e0e0;border-left:1px solid #5a0c0c;border-right:1px solid #d0d0d0;box-shadow:1px 0 0 #5a0c0c,-1px 0 0 #000"></div><pre class="a term" style="left:334.0px;top:74.19px">                      <span style="color:#3fd08a;font-weight:bold">• MobaXterm Personal Edition v21.2 •</span>
                    <span style="color:#d8d070;">(SSH client, X server and network tools)</span>

      <span style="color:#7ab0f0;">➤ </span>SSH session to <span style="color:#e848e8;">root@137.173.180.59</span>
        • Direct SSH      :  <span style="color:#3fd08a;">✔</span>
        • SSH compression :  <span style="color:#3fd08a;">✔</span>
        • SSH-browser     :  <span style="color:#3fd08a;">✔</span>
        • X11-forwarding  :  <span style="color:#3fd08a;">✔</span>  (remote display is forwarded through SSH)

      <span style="color:#7ab0f0;">➤ </span>For more <span style="color:#3a9cc8;">info</span>, ctrl+click on <span style="color:#40a8b8;text-decoration:underline;">help</span> or visit our <span style="color:#40a8b8;text-decoration:underline;">website</span>.


Welcome to Ubuntu 20.04 LTS (GNU/Linux 5.4.0-28-generic x86_64)

 * Documentation:  <span style="text-decoration:underline;">https://help.ubuntu.com</span>
 * Management:     <span style="text-decoration:underline;">https://landscape.canonical.com</span>
 * Support:        <span style="text-decoration:underline;">https://ubuntu.com/advantage</span>

<span style="color:#3a9cc8;">Last login:</span> Fri Jan 14 15:42:36 2022 from <span style="color:#e848e8;">14.192.213.32</span>
root@racknerd-5ada28:~# sudo apt-get install apt-transport-https aspnetcore-runtime-5.0
Reading package lists... Done
<span style="color:#3a9cc8;">Building</span> dependency tree
Reading state <span style="color:#3a9cc8;">information</span>... Done
apt-transport-https is already the newest version (2.0.6).
aspnetcore-runtime-5.0 is already the newest version (5.0.13-1).
0 upgraded, 0 newly installed, 0 to remove and 124 not upgraded.
root@racknerd-5ada28:~# cd /var/www/
root@racknerd-5ada28:/var/www# ls
<span style="color:#3a9cc8;">dashboard.zippisite.com</span>  <span style="color:#3a9cc8;">fastify</span>  <span style="color:#3a9cc8;">node_modules</span>  package.json  package-lock.json  <span style="color:#3a9cc8;">zippisite.com</span>
root@racknerd-5ada28:/var/www# cd dashboard.zippisite.com
-bash: cd: dashboard.zippisite.com: <span style="color:#e03030;">No</span> such file or directory
<span style="color:#a8a8a8;">root@racknerd-5ada28:/var/www# cd dashboard.zippisite.com/</span>
root@racknerd-5ada28:/var/www/dashboard.zippisite.com# <span style="background:#c8c8d0;color:#c8c8d0"> </span>
</pre><div class="a" style="left:333px;top:515px;width:667px;height:12px;background:#f0f0f0"></div><div class="a" style="left:333px;top:515px;width:63px;height:11.5px;background:#e6e6e6;border-right:1px solid #c8c8c8"></div><div class="a" style="left:397px;top:515px;width:33px;height:11.5px;background:#e6e6e6;border-right:1px solid #c8c8c8"></div><div class="a" style="left:454px;top:515px;width:67.60000000000002px;height:11.5px;background:#e6e6e6;border-right:1px solid #c8c8c8"></div><div class="a" style="left:522.6px;top:515px;width:45.69999999999993px;height:11.5px;background:#e6e6e6;border-right:1px solid #c8c8c8"></div><div class="a" style="left:569.3px;top:515px;width:45.700000000000045px;height:11.5px;background:#e6e6e6;border-right:1px solid #c8c8c8"></div><div class="a" style="left:616px;top:515px;width:37.5px;height:11.5px;background:#e6e6e6;border-right:1px solid #c8c8c8"></div><div class="a" style="left:654.5px;top:515px;width:32.5px;height:11.5px;background:#e6e6e6;border-right:1px solid #c8c8c8"></div><div class="a" style="left:688px;top:515px;width:43.39999999999998px;height:11.5px;background:#e6e6e6;border-right:1px solid #c8c8c8"></div><div class="a" style="left:431px;top:515.5px;width:22.6px;height:10.5px;background:#000"></div><svg class="a" style="left:431px;top:515.5px" width="23" height="10.5" viewBox="0 0 23 10.5"><path d="M0 10H5L6 9L8 9.5L12 9L16 9.5L18 7L20 9.5H23" stroke="#20a020" stroke-width="0.8" fill="none"/></svg><div class="a" style="left:348.50px;top:517.22px;font-size:6.3px;line-height:7.56px;color:#333;transform:scaleX(0.9133);transform-origin:0 50%;">racknerd-5ada28</div><div class="a" style="left:414.00px;top:517.22px;font-size:6.3px;line-height:7.56px;color:#333;transform:scaleX(0.8786);transform-origin:0 50%;">5%</div><div class="a" style="left:472.00px;top:517.22px;font-size:6.3px;line-height:7.56px;color:#333;transform:scaleX(0.9518);transform-origin:0 50%;">1.31 GB / 2.92 GB</div><div class="a" style="left:539.00px;top:517.22px;font-size:6.3px;line-height:7.56px;color:#333;transform:scaleX(0.9037);transform-origin:0 50%;">0.43 Mb/s</div><div class="a" style="left:586.00px;top:517.22px;font-size:6.3px;line-height:7.56px;color:#333;transform:scaleX(0.9037);transform-origin:0 50%;">0.05 Mb/s</div><div class="a" style="left:633.00px;top:517.22px;font-size:6.3px;line-height:7.56px;color:#333;transform:scaleX(0.8620);transform-origin:0 50%;">3 days</div><div class="a" style="left:670.00px;top:517.22px;font-size:6.3px;line-height:7.56px;color:#333;transform:scaleX(1.0133);transform-origin:0 50%;">root</div><div class="a" style="left:706.00px;top:517.22px;font-size:6.3px;line-height:7.56px;color:#333;transform:scaleX(1.0076);transform-origin:0 50%;">6.37%</div><div class="a" style="left:337.6px;top:516.5px;line-height:0"><svg width="7.5" height="8" viewBox="0 0 8 8"><rect width="8" height="8" fill="#333"/><circle cx="4.5" cy="4.5" r="2.5" fill="#e84020"/></svg></div><div class="a" style="left:401.4px;top:516.5px;line-height:0"><svg width="8" height="8" viewBox="0 0 8 8"><rect x="1" y="1" width="6" height="6" fill="#2a8a30" stroke="#e0c040" stroke-width="0.7"/></svg></div><div class="a" style="left:460px;top:517.5px;line-height:0"><svg width="8.5" height="6" viewBox="0 0 8.5 6"><rect width="8.5" height="6" fill="#2a9a40"/><rect x="1" y="1.5" width="6.5" height="2" fill="#1a5a20"/></svg></div><div class="a" style="left:527.6px;top:516.5px;line-height:0"><svg width="6" height="8.5" viewBox="0 0 6 8.5"><path d="M0.3 0.6H5.7" stroke="#20a0a0" stroke-width="1"/><path d="M3 8.5V2.5M0.8 4.8L3 2.5L5.2 4.8" stroke="#20a0a0" stroke-width="1.3" fill="none"/></svg></div><div class="a" style="left:575.5px;top:516.5px;line-height:0"><svg width="6" height="8.5" viewBox="0 0 6 8.5"><path d="M3 0V5.5M1.2 4L3 6L4.8 4" stroke="#2070d0" stroke-width="1.1" fill="none"/><path d="M0.3 7.8H5.7" stroke="#2070d0" stroke-width="1"/></svg></div><div class="a" style="left:620px;top:516.5px;line-height:0"><svg width="8" height="8" viewBox="0 0 8 8"><rect x="0.5" y="0.5" width="7" height="5.5" fill="#d8e8f0" stroke="#6a8a9a" stroke-width="0.6"/><path d="M4 6V7.5M2 7.7H6" stroke="#556" stroke-width="0.6"/><circle cx="4" cy="3.2" r="1.5" fill="#40a080"/></svg></div><div class="a" style="left:658px;top:516.5px;line-height:0"><svg width="6.5" height="8" viewBox="0 0 6.5 8"><rect width="6.5" height="8" fill="#222"/><circle cx="3.25" cy="3.2" r="1.4" fill="#f0b060"/><path d="M1 7.5Q3.25 4 5.5 7.5Z" fill="#f0b060"/></svg></div><div class="a" style="left:690.6px;top:516.5px;line-height:0"><svg width="8" height="8" viewBox="0 0 8 8"><rect x="0.3" y="0.3" width="7.4" height="7.4" rx="1.2" fill="#4a7a9a"/><rect x="1.3" y="4" width="5.4" height="2.5" fill="#1a3a5a"/><rect x="1.3" y="1.2" width="5.4" height="2" fill="#9ac0d8"/></svg></div><div class="a" style="left:985px;top:516px;width:13px;height:11px;background:#fafafa;border-radius:1.5px;box-shadow:0 0 0.6px #ccc"></div><svg class="a" style="left:987px;top:516.6px" width="9" height="9" viewBox="0 0 9 9"><circle cx="4.5" cy="4.5" r="4.3" fill="#e53935"/><path d="M3 3L6 6M6 3L3 6" stroke="#fff" stroke-width="0.9"/></svg><svg class="a" style="left:0;top:0" width="1000" height="537" viewBox="0 0 1000 537"><path d="M113.6 92.8L324.6 319.2" stroke="#f00" stroke-width="3.1"/><rect x="10.2" y="78.4" width="104" height="15.1" fill="none" stroke="#f00" stroke-width="2"/><rect x="324.4" y="319.2" width="253.6" height="17.4" fill="none" stroke="#f00" stroke-width="2"/><circle cx="150" cy="254.5" r="18.2" fill="none" stroke="#f2f018" stroke-width="1.6"/></svg><div class="a" style="left:237.2px;top:290.4px;width:43.6px;height:11.6px;background:#f8f8f8;border:0.5px solid #e0e0e0;box-shadow:1px 1px 1.5px rgba(0,0,0,0.25)"></div><div class="a" style="left:244.00px;top:292.36px;font-size:6.4px;line-height:7.68px;color:#222;transform:scaleX(1.0324);transform-origin:0 50%;">/var/www/</div><svg class="a" style="left:151px;top:254px" width="5" height="9" viewBox="0 0 5 9"><path d="M0.5 0.5V8L2 6.5L3.2 8.5L4 8L3 6H4.8Z" fill="#222" stroke="#fff" stroke-width="0.3"/></svg></body></html>
